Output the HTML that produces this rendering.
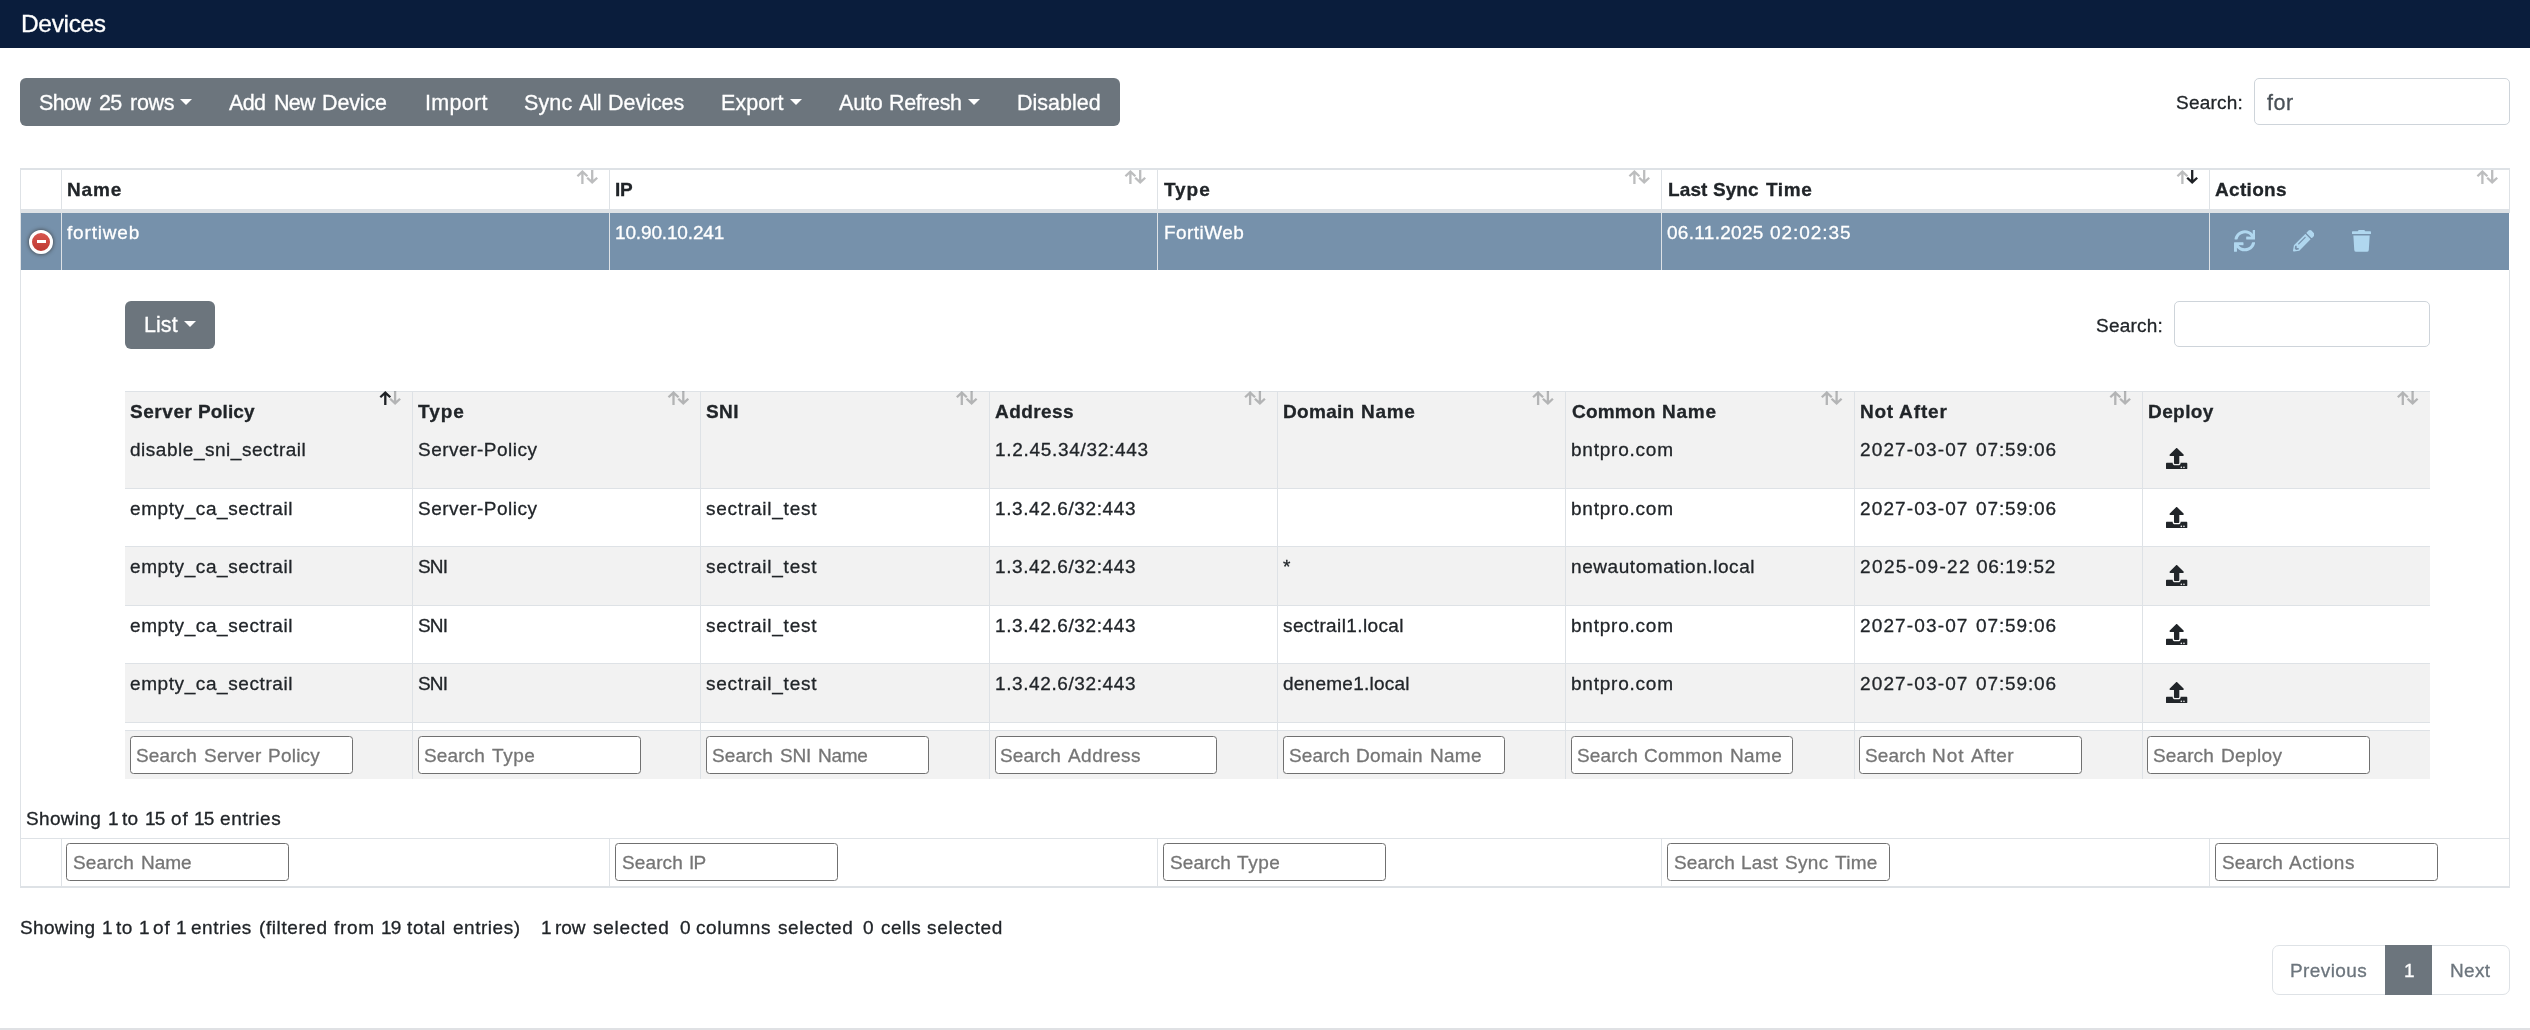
<!DOCTYPE html>
<html lang="en">
<head>
<meta charset="utf-8">
<title>Devices</title>
<style>
html,body{margin:0;padding:0;}
body{width:2530px;height:1030px;position:relative;overflow:hidden;background:#fff;
font-family:"Liberation Sans",sans-serif;color:#212529;}
.r{position:absolute;box-sizing:content-box;}
.t{position:absolute;white-space:nowrap;will-change:transform;-webkit-text-stroke:0.3px;line-height:24px;height:24px;}
.inp{position:absolute;box-sizing:border-box;border:1px solid #ced4da;border-radius:5px;background:#fff;}
.fin{position:absolute;box-sizing:border-box;width:222.8px;height:38px;border:1px solid #707070;border-radius:3.5px;background:#fff;}
</style>
</head>
<body>
<div class="r" style="left:0px;top:0px;width:2530px;height:48px;background:#0a1d3c;"></div>
<div class="t" style="left:20.60px;top:12px;font-size:24.5px;letter-spacing:-0.341px;color:#fff;">Devices</div>
<div class="r" style="left:20px;top:78px;width:1100px;height:48px;background:#6c757d;border-radius:6px;"></div>
<div class="t" style="left:39.30px;top:91px;font-size:21.5px;letter-spacing:-0.612px;color:#fff;">Show</div>
<div class="t" style="left:98.60px;top:91px;font-size:21.5px;letter-spacing:-0.800px;color:#fff;">25</div>
<div class="t" style="left:129.50px;top:91px;font-size:21.5px;letter-spacing:-0.262px;color:#fff;">rows</div>
<div class="t" style="left:229.00px;top:91px;font-size:21.5px;letter-spacing:-0.624px;color:#fff;">Add</div>
<div class="t" style="left:273.50px;top:91px;font-size:21.5px;letter-spacing:-0.800px;color:#fff;">New</div>
<div class="t" style="left:322.20px;top:91px;font-size:21.5px;letter-spacing:-0.145px;color:#fff;">Device</div>
<div class="t" style="left:424.70px;top:91px;font-size:21.5px;letter-spacing:0.314px;color:#fff;">Import</div>
<div class="t" style="left:524.00px;top:91px;font-size:21.5px;letter-spacing:0.135px;color:#fff;">Sync</div>
<div class="t" style="left:578.50px;top:91px;font-size:21.5px;letter-spacing:-0.693px;color:#fff;">All</div>
<div class="t" style="left:607.70px;top:91px;font-size:21.5px;letter-spacing:-0.029px;color:#fff;">Devices</div>
<div class="t" style="left:721.00px;top:91px;font-size:21.5px;letter-spacing:0.073px;color:#fff;">Export</div>
<div class="t" style="left:838.50px;top:91px;font-size:21.5px;letter-spacing:-0.175px;color:#fff;">Auto</div>
<div class="t" style="left:889.20px;top:91px;font-size:21.5px;letter-spacing:-0.379px;color:#fff;">Refresh</div>
<div class="t" style="left:1017.20px;top:91px;font-size:21.5px;letter-spacing:0.006px;color:#fff;">Disabled</div>
<div class="r" style="left:180.2px;top:99.2px;width:0;height:0;border-left:6px solid transparent;border-right:6px solid transparent;border-top:6px solid #fff;"></div>
<div class="r" style="left:789.6px;top:99.2px;width:0;height:0;border-left:6px solid transparent;border-right:6px solid transparent;border-top:6px solid #fff;"></div>
<div class="r" style="left:968.4px;top:99.2px;width:0;height:0;border-left:6px solid transparent;border-right:6px solid transparent;border-top:6px solid #fff;"></div>
<div class="t" style="left:2175.90px;top:91px;font-size:19.0px;letter-spacing:0.221px;">Search:</div>
<div class="inp" style="left:2254px;top:78px;width:256px;height:47px;"></div>
<div class="t" style="left:2267.00px;top:91px;font-size:21.5px;letter-spacing:0.505px;color:#495057;">for</div>
<div class="r" style="left:20px;top:168px;width:2490px;height:2px;background:#dee2e6;"></div>
<div class="r" style="left:20px;top:168px;width:1px;height:720px;background:#dee2e6;"></div>
<div class="r" style="left:2509px;top:168px;width:1px;height:720px;background:#dee2e6;"></div>
<div class="r" style="left:20px;top:209px;width:2490px;height:4px;background:#dee2e6;"></div>
<div class="r" style="left:21px;top:213px;width:2488px;height:57px;background:#7691ab;"></div>
<div class="r" style="left:2509px;top:213px;width:1px;height:57px;background:#fff;"></div>
<div class="r" style="left:20px;top:838px;width:2490px;height:1px;background:#dee2e6;"></div>
<div class="r" style="left:20px;top:886px;width:2490px;height:2px;background:#dee2e6;"></div>
<div class="r" style="left:61px;top:170px;width:1px;height:100px;background:#dee2e6;"></div>
<div class="r" style="left:61px;top:839px;width:1px;height:47px;background:#dee2e6;"></div>
<div class="r" style="left:609px;top:170px;width:1px;height:100px;background:#dee2e6;"></div>
<div class="r" style="left:609px;top:839px;width:1px;height:47px;background:#dee2e6;"></div>
<div class="r" style="left:1157px;top:170px;width:1px;height:100px;background:#dee2e6;"></div>
<div class="r" style="left:1157px;top:839px;width:1px;height:47px;background:#dee2e6;"></div>
<div class="r" style="left:1661px;top:170px;width:1px;height:100px;background:#dee2e6;"></div>
<div class="r" style="left:1661px;top:839px;width:1px;height:47px;background:#dee2e6;"></div>
<div class="r" style="left:2209px;top:170px;width:1px;height:100px;background:#dee2e6;"></div>
<div class="r" style="left:2209px;top:839px;width:1px;height:47px;background:#dee2e6;"></div>
<div class="t" style="left:66.70px;top:178px;font-size:19.0px;letter-spacing:0.848px;font-weight:700;">Name</div>
<div class="t" style="left:615.20px;top:178px;font-size:19.0px;letter-spacing:-0.355px;font-weight:700;">IP</div>
<div class="t" style="left:1164.00px;top:178px;font-size:19.0px;letter-spacing:0.920px;font-weight:700;">Type</div>
<div class="t" style="left:1667.70px;top:178px;font-size:19.0px;letter-spacing:0.112px;font-weight:700;">Last</div>
<div class="t" style="left:1713.40px;top:178px;font-size:19.0px;letter-spacing:0.063px;font-weight:700;">Sync</div>
<div class="t" style="left:1765.70px;top:178px;font-size:19.0px;letter-spacing:0.565px;font-weight:700;">Time</div>
<div class="t" style="left:2215.40px;top:178px;font-size:19.0px;letter-spacing:0.321px;font-weight:700;">Actions</div>
<div class="t" style="left:66.70px;top:221px;font-size:19.0px;letter-spacing:0.826px;color:#fff;">fortiweb</div>
<div class="t" style="left:615.40px;top:221px;font-size:19.0px;letter-spacing:-0.149px;color:#fff;">10.90.10.241</div>
<div class="t" style="left:1164.20px;top:221px;font-size:19.0px;letter-spacing:0.440px;color:#fff;">FortiWeb</div>
<div class="t" style="left:1667.10px;top:221px;font-size:19.0px;letter-spacing:0.301px;color:#fff;">06.11.2025</div>
<div class="t" style="left:1770.20px;top:221px;font-size:19.0px;letter-spacing:0.948px;color:#fff;">02:02:35</div>
<div class="r" style="left:28.6px;top:229.8px;width:18.4px;height:18.4px;border:3px solid #fff;border-radius:50%;background:linear-gradient(#d8554f,#bd3a33);box-shadow:0 0 4px #3a3a3a;"></div>
<div class="r" style="left:36.7px;top:240.3px;width:9.0px;height:3.2px;background:#fff;"></div>
<svg class="r" style="left:2233.7px;top:230.1px;" width="21.70" height="21.7" viewBox="0 0 512 512"><path fill="#b0d7ef" d="M440.65 12.57l4 82.77A247.16 247.16 0 0 0 255.83 8C134.73 8 33.91 94.92 12.29 209.82A12 12 0 0 0 24.09 224h49.05a12 12 0 0 0 11.67-9.26 175.91 175.91 0 0 1 317-56.94l-101.46-4.86a12 12 0 0 0-12.57 12v47.41a12 12 0 0 0 12 12H500a12 12 0 0 0 12-12V12a12 12 0 0 0-12-12h-47.37a12 12 0 0 0-11.98 12.57zM255.83 432a175.61 175.61 0 0 1-146-77.8l101.8 4.87a12 12 0 0 0 12.57-12v-47.4a12 12 0 0 0-12-12H12a12 12 0 0 0-12 12V500a12 12 0 0 0 12 12h47.35a12 12 0 0 0 12-12.6l-4.15-82.57A247.17 247.17 0 0 0 255.83 504c121.11 0 221.93-86.92 243.55-201.82a12 12 0 0 0-11.8-14.18h-49.05a12 12 0 0 0-11.67 9.26A175.86 175.86 0 0 1 255.83 432z"/></svg>
<svg class="r" style="left:2292.9px;top:230.3px;" width="21.60" height="21.6" viewBox="0 0 512 512"><path fill="#b0d7ef" d="M497.9 142.1l-46.1 46.1c-4.7 4.7-12.3 4.7-17 0l-111-111c-4.7-4.7-4.7-12.3 0-17l46.1-46.1c18.7-18.7 49.1-18.7 67.9 0l60.1 60.1c18.8 18.7 18.8 49.1 0 67.9zM284.2 99.8L21.6 362.4.4 483.9c-2.9 16.4 11.4 30.6 27.8 27.8l121.500-21.3 262.6-262.6c4.700-4.700 4.700-12.300 0-17l-111-111c-4.800-4.700-12.400-4.700-17.100 0zM124.1 339.9c-5.500-5.500-5.500-14.300 0-19.800l154-154c5.500-5.500 14.300-5.500 19.800 0s5.500 14.300 0 19.800l-154 154c-5.500 5.500-14.300 5.500-19.800 0zM88 424h48v36.300l-64.500 11.300-31.100-31.100L51.700 376H88v48z"/></svg>
<svg class="r" style="left:2351.9px;top:230.2px;" width="19.07" height="21.8" viewBox="0 0 448 512"><path fill="#b0d7ef" d="M432 32H312l-9.400-18.700A24 24 0 0 0 281.100 0H166.800a23.720 23.720 0 0 0-21.400 13.300L136 32H16A16 16 0 0 0 0 48v32a16 16 0 0 0 16 16h416a16 16 0 0 0 16-16V48a16 16 0 0 0-16-16zM53.200 467a48 48 0 0 0 47.900 45h245.800a48 48 0 0 0 47.900-45L416 128H32z"/></svg>
<div class="r" style="left:125px;top:301px;width:90px;height:48px;background:#6c757d;border-radius:6px;"></div>
<div class="t" style="left:144.10px;top:313px;font-size:21.5px;letter-spacing:0.049px;color:#fff;">List</div>
<div class="r" style="left:184.4px;top:321px;width:0;height:0;border-left:6px solid transparent;border-right:6px solid transparent;border-top:6px solid #fff;"></div>
<div class="t" style="left:2096.00px;top:314px;font-size:19.0px;letter-spacing:0.221px;">Search:</div>
<div class="inp" style="left:2174px;top:301px;width:256px;height:46px;"></div>
<div class="r" style="left:125px;top:391px;width:2305px;height:1px;background:#dee2e6;"></div>
<div class="r" style="left:125px;top:392px;width:2305px;height:96px;background:#f2f2f2;"></div>
<div class="r" style="left:125px;top:488px;width:2305px;height:1px;background:#dee2e6;"></div>
<div class="r" style="left:125px;top:546px;width:2305px;height:1px;background:#dee2e6;"></div>
<div class="r" style="left:125px;top:547px;width:2305px;height:58px;background:#f2f2f2;"></div>
<div class="r" style="left:125px;top:605px;width:2305px;height:1px;background:#dee2e6;"></div>
<div class="r" style="left:125px;top:663px;width:2305px;height:1px;background:#dee2e6;"></div>
<div class="r" style="left:125px;top:664px;width:2305px;height:58px;background:#f2f2f2;"></div>
<div class="r" style="left:125px;top:722px;width:2305px;height:1px;background:#dee2e6;"></div>
<div class="r" style="left:125px;top:730px;width:2305px;height:1px;background:#dee2e6;"></div>
<div class="r" style="left:125px;top:731px;width:2305px;height:48px;background:#f2f2f2;"></div>
<div class="r" style="left:412px;top:391px;width:1px;height:388px;background:#dee2e6;"></div>
<div class="r" style="left:700px;top:391px;width:1px;height:388px;background:#dee2e6;"></div>
<div class="r" style="left:989px;top:391px;width:1px;height:388px;background:#dee2e6;"></div>
<div class="r" style="left:1277px;top:391px;width:1px;height:388px;background:#dee2e6;"></div>
<div class="r" style="left:1565px;top:391px;width:1px;height:388px;background:#dee2e6;"></div>
<div class="r" style="left:1854px;top:391px;width:1px;height:388px;background:#dee2e6;"></div>
<div class="r" style="left:2142px;top:391px;width:1px;height:388px;background:#dee2e6;"></div>
<div class="t" style="left:130.00px;top:400px;font-size:19.0px;letter-spacing:0.567px;font-weight:700;">Server</div>
<div class="t" style="left:197.90px;top:400px;font-size:19.0px;letter-spacing:0.125px;font-weight:700;">Policy</div>
<div class="t" style="left:418.40px;top:400px;font-size:19.0px;letter-spacing:0.987px;font-weight:700;">Type</div>
<div class="t" style="left:706.20px;top:400px;font-size:19.0px;letter-spacing:0.414px;font-weight:700;">SNI</div>
<div class="t" style="left:994.70px;top:400px;font-size:19.0px;letter-spacing:0.413px;font-weight:700;">Address</div>
<div class="t" style="left:1283.30px;top:400px;font-size:19.0px;letter-spacing:0.305px;font-weight:700;">Domain</div>
<div class="t" style="left:1360.80px;top:400px;font-size:19.0px;letter-spacing:0.715px;font-weight:700;">Name</div>
<div class="t" style="left:1571.80px;top:400px;font-size:19.0px;letter-spacing:0.215px;font-weight:700;">Common</div>
<div class="t" style="left:1661.90px;top:400px;font-size:19.0px;letter-spacing:0.748px;font-weight:700;">Name</div>
<div class="t" style="left:1859.80px;top:400px;font-size:19.0px;letter-spacing:0.723px;font-weight:700;">Not</div>
<div class="t" style="left:1898.70px;top:400px;font-size:19.0px;letter-spacing:0.914px;font-weight:700;">After</div>
<div class="t" style="left:2148.00px;top:400px;font-size:19.0px;letter-spacing:0.411px;font-weight:700;">Deploy</div>
<div class="t" style="left:130.00px;top:438px;font-size:19.0px;letter-spacing:0.526px;">disable_sni_sectrail</div>
<div class="t" style="left:418.20px;top:438px;font-size:19.0px;letter-spacing:0.502px;">Server-Policy</div>
<div class="t" style="left:994.70px;top:438px;font-size:19.0px;letter-spacing:0.691px;">1.2.45.34/32:443</div>
<div class="t" style="left:1571.20px;top:438px;font-size:19.0px;letter-spacing:0.774px;">bntpro.com</div>
<div class="t" style="left:1860.20px;top:438px;font-size:19.0px;letter-spacing:1.135px;">2027-03-07</div>
<div class="t" style="left:1975.60px;top:438px;font-size:19.0px;letter-spacing:0.876px;">07:59:06</div>
<svg class="r" style="left:2166.4px;top:448.1px;" width="21.30" height="21.3" viewBox="0 0 512 512"><path fill="#212529" d="M296 384h-80c-13.300 0-24-10.700-24-24V192h-87.700c-17.800 0-26.700-21.500-14.100-34.100L242.300 5.700c7.500-7.500 19.800-7.500 27.300 0l152.200 152.200c12.600 12.600 3.700 34.100-14.100 34.100H320v168c0 13.300-10.700 24-24 24zm216-8v112c0 13.300-10.700 24-24 24H24c-13.300 0-24-10.700-24-24V376c0-13.300 10.700-24 24-24h136v8c0 30.900 25.100 56 56 56h80c30.900 0 56-25.100 56-56v-8h136c13.300 0 24 10.700 24 24zm-124 88c0-11-9-20-20-20s-20 9-20 20 9 20 20 20 20-9 20-20zm64 0c0-11-9-20-20-20s-20 9-20 20 9 20 20 20 20-9 20-20z"/></svg>
<div class="t" style="left:130.00px;top:497px;font-size:19.0px;letter-spacing:0.586px;">empty_ca_sectrail</div>
<div class="t" style="left:418.20px;top:497px;font-size:19.0px;letter-spacing:0.502px;">Server-Policy</div>
<div class="t" style="left:706.20px;top:497px;font-size:19.0px;letter-spacing:0.761px;">sectrail_test</div>
<div class="t" style="left:994.70px;top:497px;font-size:19.0px;letter-spacing:0.602px;">1.3.42.6/32:443</div>
<div class="t" style="left:1571.20px;top:497px;font-size:19.0px;letter-spacing:0.774px;">bntpro.com</div>
<div class="t" style="left:1860.20px;top:497px;font-size:19.0px;letter-spacing:1.135px;">2027-03-07</div>
<div class="t" style="left:1975.60px;top:497px;font-size:19.0px;letter-spacing:0.876px;">07:59:06</div>
<svg class="r" style="left:2166.4px;top:506.6px;" width="21.30" height="21.3" viewBox="0 0 512 512"><path fill="#212529" d="M296 384h-80c-13.300 0-24-10.700-24-24V192h-87.700c-17.800 0-26.700-21.500-14.100-34.100L242.300 5.700c7.500-7.500 19.800-7.500 27.300 0l152.200 152.200c12.600 12.600 3.700 34.100-14.100 34.100H320v168c0 13.300-10.700 24-24 24zm216-8v112c0 13.300-10.700 24-24 24H24c-13.300 0-24-10.700-24-24V376c0-13.300 10.700-24 24-24h136v8c0 30.900 25.100 56 56 56h80c30.900 0 56-25.100 56-56v-8h136c13.300 0 24 10.700 24 24zm-124 88c0-11-9-20-20-20s-20 9-20 20 9 20 20 20 20-9 20-20zm64 0c0-11-9-20-20-20s-20 9-20 20 9 20 20 20 20-9 20-20z"/></svg>
<div class="t" style="left:130.00px;top:555px;font-size:19.0px;letter-spacing:0.586px;">empty_ca_sectrail</div>
<div class="t" style="left:418.20px;top:555px;font-size:19.0px;letter-spacing:-0.800px;">SNI</div>
<div class="t" style="left:706.20px;top:555px;font-size:19.0px;letter-spacing:0.761px;">sectrail_test</div>
<div class="t" style="left:994.70px;top:555px;font-size:19.0px;letter-spacing:0.602px;">1.3.42.6/32:443</div>
<div class="t" style="left:1283.20px;top:555px;font-size:19.0px;">*</div>
<div class="t" style="left:1571.20px;top:555px;font-size:19.0px;letter-spacing:0.571px;">newautomation.local</div>
<div class="t" style="left:1860.20px;top:555px;font-size:19.0px;letter-spacing:1.379px;">2025-09-22</div>
<div class="t" style="left:1977.10px;top:555px;font-size:19.0px;letter-spacing:0.605px;">06:19:52</div>
<svg class="r" style="left:2166.4px;top:565.1px;" width="21.30" height="21.3" viewBox="0 0 512 512"><path fill="#212529" d="M296 384h-80c-13.300 0-24-10.700-24-24V192h-87.700c-17.800 0-26.700-21.500-14.100-34.100L242.300 5.700c7.500-7.500 19.800-7.500 27.300 0l152.200 152.200c12.600 12.600 3.700 34.100-14.100 34.100H320v168c0 13.300-10.700 24-24 24zm216-8v112c0 13.300-10.700 24-24 24H24c-13.300 0-24-10.700-24-24V376c0-13.300 10.700-24 24-24h136v8c0 30.900 25.100 56 56 56h80c30.900 0 56-25.100 56-56v-8h136c13.300 0 24 10.700 24 24zm-124 88c0-11-9-20-20-20s-20 9-20 20 9 20 20 20 20-9 20-20zm64 0c0-11-9-20-20-20s-20 9-20 20 9 20 20 20 20-9 20-20z"/></svg>
<div class="t" style="left:130.00px;top:614px;font-size:19.0px;letter-spacing:0.586px;">empty_ca_sectrail</div>
<div class="t" style="left:418.20px;top:614px;font-size:19.0px;letter-spacing:-0.800px;">SNI</div>
<div class="t" style="left:706.20px;top:614px;font-size:19.0px;letter-spacing:0.761px;">sectrail_test</div>
<div class="t" style="left:994.70px;top:614px;font-size:19.0px;letter-spacing:0.602px;">1.3.42.6/32:443</div>
<div class="t" style="left:1283.20px;top:614px;font-size:19.0px;letter-spacing:0.386px;">sectrail1.local</div>
<div class="t" style="left:1571.20px;top:614px;font-size:19.0px;letter-spacing:0.774px;">bntpro.com</div>
<div class="t" style="left:1860.20px;top:614px;font-size:19.0px;letter-spacing:1.135px;">2027-03-07</div>
<div class="t" style="left:1975.60px;top:614px;font-size:19.0px;letter-spacing:0.876px;">07:59:06</div>
<svg class="r" style="left:2166.4px;top:623.6px;" width="21.30" height="21.3" viewBox="0 0 512 512"><path fill="#212529" d="M296 384h-80c-13.300 0-24-10.700-24-24V192h-87.700c-17.800 0-26.700-21.500-14.100-34.100L242.300 5.700c7.500-7.500 19.800-7.500 27.300 0l152.200 152.200c12.600 12.600 3.700 34.100-14.100 34.100H320v168c0 13.300-10.700 24-24 24zm216-8v112c0 13.300-10.700 24-24 24H24c-13.300 0-24-10.700-24-24V376c0-13.300 10.700-24 24-24h136v8c0 30.900 25.100 56 56 56h80c30.900 0 56-25.100 56-56v-8h136c13.300 0 24 10.700 24 24zm-124 88c0-11-9-20-20-20s-20 9-20 20 9 20 20 20 20-9 20-20zm64 0c0-11-9-20-20-20s-20 9-20 20 9 20 20 20 20-9 20-20z"/></svg>
<div class="t" style="left:130.00px;top:672px;font-size:19.0px;letter-spacing:0.586px;">empty_ca_sectrail</div>
<div class="t" style="left:418.20px;top:672px;font-size:19.0px;letter-spacing:-0.800px;">SNI</div>
<div class="t" style="left:706.20px;top:672px;font-size:19.0px;letter-spacing:0.761px;">sectrail_test</div>
<div class="t" style="left:994.70px;top:672px;font-size:19.0px;letter-spacing:0.602px;">1.3.42.6/32:443</div>
<div class="t" style="left:1283.20px;top:672px;font-size:19.0px;letter-spacing:0.244px;">deneme1.local</div>
<div class="t" style="left:1571.20px;top:672px;font-size:19.0px;letter-spacing:0.774px;">bntpro.com</div>
<div class="t" style="left:1860.20px;top:672px;font-size:19.0px;letter-spacing:1.135px;">2027-03-07</div>
<div class="t" style="left:1975.60px;top:672px;font-size:19.0px;letter-spacing:0.876px;">07:59:06</div>
<svg class="r" style="left:2166.4px;top:682.1px;" width="21.30" height="21.3" viewBox="0 0 512 512"><path fill="#212529" d="M296 384h-80c-13.300 0-24-10.700-24-24V192h-87.700c-17.800 0-26.700-21.500-14.100-34.100L242.300 5.700c7.500-7.500 19.800-7.500 27.300 0l152.200 152.200c12.600 12.600 3.700 34.100-14.100 34.100H320v168c0 13.300-10.700 24-24 24zm216-8v112c0 13.300-10.700 24-24 24H24c-13.300 0-24-10.700-24-24V376c0-13.300 10.700-24 24-24h136v8c0 30.900 25.100 56 56 56h80c30.900 0 56-25.100 56-56v-8h136c13.300 0 24 10.700 24 24zm-124 88c0-11-9-20-20-20s-20 9-20 20 9 20 20 20 20-9 20-20zm64 0c0-11-9-20-20-20s-20 9-20 20 9 20 20 20 20-9 20-20z"/></svg>
<div class="fin" style="left:130.1px;top:736px;"></div>
<div class="t" style="left:136.10px;top:744px;font-size:19.0px;letter-spacing:0.122px;color:#757575;">Search</div>
<div class="t" style="left:203.70px;top:744px;font-size:19.0px;letter-spacing:0.257px;color:#757575;">Server</div>
<div class="t" style="left:267.74px;top:744px;font-size:19.0px;letter-spacing:0.233px;color:#757575;">Policy</div>
<div class="fin" style="left:418.2px;top:736px;"></div>
<div class="t" style="left:424.23px;top:744px;font-size:19.0px;letter-spacing:0.122px;color:#757575;">Search</div>
<div class="t" style="left:491.82px;top:744px;font-size:19.0px;letter-spacing:0.569px;color:#757575;">Type</div>
<div class="fin" style="left:706.4px;top:736px;"></div>
<div class="t" style="left:712.35px;top:744px;font-size:19.0px;letter-spacing:0.122px;color:#757575;">Search</div>
<div class="t" style="left:779.95px;top:744px;font-size:19.0px;letter-spacing:-0.243px;color:#757575;">SNI</div>
<div class="t" style="left:817.94px;top:744px;font-size:19.0px;letter-spacing:-0.260px;color:#757575;">Name</div>
<div class="fin" style="left:994.5px;top:736px;"></div>
<div class="t" style="left:1000.48px;top:744px;font-size:19.0px;letter-spacing:0.122px;color:#757575;">Search</div>
<div class="t" style="left:1068.08px;top:744px;font-size:19.0px;letter-spacing:0.451px;color:#757575;">Address</div>
<div class="fin" style="left:1282.6px;top:736px;"></div>
<div class="t" style="left:1288.60px;top:744px;font-size:19.0px;letter-spacing:0.122px;color:#757575;">Search</div>
<div class="t" style="left:1356.20px;top:744px;font-size:19.0px;letter-spacing:0.218px;color:#757575;">Domain</div>
<div class="t" style="left:1429.56px;top:744px;font-size:19.0px;letter-spacing:0.281px;color:#757575;">Name</div>
<div class="fin" style="left:1570.7px;top:736px;"></div>
<div class="t" style="left:1576.72px;top:744px;font-size:19.0px;letter-spacing:0.122px;color:#757575;">Search</div>
<div class="t" style="left:1644.33px;top:744px;font-size:19.0px;letter-spacing:0.341px;color:#757575;">Common</div>
<div class="t" style="left:1729.91px;top:744px;font-size:19.0px;letter-spacing:0.374px;color:#757575;">Name</div>
<div class="fin" style="left:1858.8px;top:736px;"></div>
<div class="t" style="left:1864.85px;top:744px;font-size:19.0px;letter-spacing:0.122px;color:#757575;">Search</div>
<div class="t" style="left:1932.45px;top:744px;font-size:19.0px;letter-spacing:0.935px;color:#757575;">Not</div>
<div class="t" style="left:1970.68px;top:744px;font-size:19.0px;letter-spacing:0.635px;color:#757575;">After</div>
<div class="fin" style="left:2147.0px;top:736px;"></div>
<div class="t" style="left:2152.97px;top:744px;font-size:19.0px;letter-spacing:0.122px;color:#757575;">Search</div>
<div class="t" style="left:2220.57px;top:744px;font-size:19.0px;letter-spacing:0.351px;color:#757575;">Deploy</div>
<div class="t" style="left:26.00px;top:807px;font-size:19.0px;letter-spacing:0.319px;">Showing</div>
<div class="t" style="left:107.50px;top:807px;font-size:19.0px;">1</div>
<div class="t" style="left:121.80px;top:807px;font-size:19.0px;letter-spacing:0.254px;">to</div>
<div class="t" style="left:144.80px;top:807px;font-size:19.0px;letter-spacing:-0.800px;">15</div>
<div class="t" style="left:171.00px;top:807px;font-size:19.0px;letter-spacing:0.916px;">of</div>
<div class="t" style="left:194.00px;top:807px;font-size:19.0px;letter-spacing:-0.800px;">15</div>
<div class="t" style="left:220.20px;top:807px;font-size:19.0px;letter-spacing:0.630px;">entries</div>
<div class="fin" style="left:66.4px;top:843px;"></div>
<div class="t" style="left:73.00px;top:851px;font-size:19.0px;letter-spacing:0.122px;color:#757575;">Search</div>
<div class="t" style="left:140.60px;top:851px;font-size:19.0px;letter-spacing:-0.064px;color:#757575;">Name</div>
<div class="fin" style="left:615.0px;top:843px;"></div>
<div class="t" style="left:621.60px;top:851px;font-size:19.0px;letter-spacing:0.122px;color:#757575;">Search</div>
<div class="t" style="left:689.20px;top:851px;font-size:19.0px;letter-spacing:-0.800px;color:#757575;">IP</div>
<div class="fin" style="left:1163.0px;top:843px;"></div>
<div class="t" style="left:1169.60px;top:851px;font-size:19.0px;letter-spacing:0.122px;color:#757575;">Search</div>
<div class="t" style="left:1237.20px;top:851px;font-size:19.0px;letter-spacing:0.569px;color:#757575;">Type</div>
<div class="fin" style="left:1667.0px;top:843px;"></div>
<div class="t" style="left:1673.60px;top:851px;font-size:19.0px;letter-spacing:0.122px;color:#757575;">Search</div>
<div class="t" style="left:1741.20px;top:851px;font-size:19.0px;letter-spacing:0.264px;color:#757575;">Last</div>
<div class="t" style="left:1784.70px;top:851px;font-size:19.0px;letter-spacing:0.310px;color:#757575;">Sync</div>
<div class="t" style="left:1834.67px;top:851px;font-size:19.0px;letter-spacing:0.305px;color:#757575;">Time</div>
<div class="fin" style="left:2215.0px;top:843px;"></div>
<div class="t" style="left:2221.60px;top:851px;font-size:19.0px;letter-spacing:0.122px;color:#757575;">Search</div>
<div class="t" style="left:2289.20px;top:851px;font-size:19.0px;letter-spacing:0.517px;color:#757575;">Actions</div>
<div class="t" style="left:20.20px;top:916px;font-size:19.0px;letter-spacing:0.353px;">Showing</div>
<div class="t" style="left:101.90px;top:916px;font-size:19.0px;">1</div>
<div class="t" style="left:115.90px;top:916px;font-size:19.0px;letter-spacing:0.454px;">to</div>
<div class="t" style="left:139.00px;top:916px;font-size:19.0px;">1</div>
<div class="t" style="left:153.20px;top:916px;font-size:19.0px;letter-spacing:0.916px;">of</div>
<div class="t" style="left:176.20px;top:916px;font-size:19.0px;">1</div>
<div class="t" style="left:190.90px;top:916px;font-size:19.0px;letter-spacing:0.547px;">entries</div>
<div class="t" style="left:259.00px;top:916px;font-size:19.0px;letter-spacing:0.592px;">(filtered</div>
<div class="t" style="left:334.00px;top:916px;font-size:19.0px;letter-spacing:0.733px;">from</div>
<div class="t" style="left:380.50px;top:916px;font-size:19.0px;letter-spacing:-0.800px;">19</div>
<div class="t" style="left:407.10px;top:916px;font-size:19.0px;letter-spacing:0.598px;">total</div>
<div class="t" style="left:452.80px;top:916px;font-size:19.0px;letter-spacing:0.519px;">entries)</div>
<div class="t" style="left:540.60px;top:916px;font-size:19.0px;">1</div>
<div class="t" style="left:554.80px;top:916px;font-size:19.0px;letter-spacing:-0.133px;">row</div>
<div class="t" style="left:592.50px;top:916px;font-size:19.0px;letter-spacing:0.732px;">selected</div>
<div class="t" style="left:679.50px;top:916px;font-size:19.0px;">0</div>
<div class="t" style="left:696.20px;top:916px;font-size:19.0px;letter-spacing:0.607px;">columns</div>
<div class="t" style="left:777.50px;top:916px;font-size:19.0px;letter-spacing:0.575px;">selected</div>
<div class="t" style="left:863.20px;top:916px;font-size:19.0px;">0</div>
<div class="t" style="left:880.60px;top:916px;font-size:19.0px;letter-spacing:0.445px;">cells</div>
<div class="t" style="left:927.10px;top:916px;font-size:19.0px;letter-spacing:0.661px;">selected</div>
<div class="r" style="left:2272px;top:945px;width:236px;height:48px;border:1px solid #dee2e6;border-radius:7px;background:#fff;"></div>
<div class="r" style="left:2385px;top:945px;width:47px;height:50px;background:#6c757d;"></div>
<div class="t" style="left:2290.30px;top:959px;font-size:19.0px;letter-spacing:0.396px;color:#6c757d;">Previous</div>
<div class="t" style="left:2404.00px;top:959px;font-size:19.0px;color:#fff;">1</div>
<div class="t" style="left:2449.90px;top:959px;font-size:19.0px;letter-spacing:0.345px;color:#6c757d;">Next</div>
<div class="r" style="left:0px;top:1028px;width:2530px;height:2px;background:#dfe1e4;"></div>
<svg class="r" style="left:0;top:0;" width="2530" height="1030" viewBox="0 0 2530 1030" fill="none" stroke-width="2.3" stroke-linecap="butt" stroke-linejoin="miter"><path d="M582.40 183.90V171.55M577.40 176.25L582.40 171.55L587.40 176.25M592.20 169.90V182.45M587.20 177.75L592.20 182.45L597.20 177.75" stroke="#212529" stroke-opacity="0.3"/><path d="M1130.40 183.90V171.55M1125.40 176.25L1130.40 171.55L1135.40 176.25M1140.20 169.90V182.45M1135.20 177.75L1140.20 182.45L1145.20 177.75" stroke="#212529" stroke-opacity="0.3"/><path d="M1634.40 183.90V171.55M1629.40 176.25L1634.40 171.55L1639.40 176.25M1644.20 169.90V182.45M1639.20 177.75L1644.20 182.45L1649.20 177.75" stroke="#212529" stroke-opacity="0.3"/><path d="M2182.40 183.90V171.55M2177.40 176.25L2182.40 171.55L2187.40 176.25" stroke="#212529" stroke-opacity="0.3"/><path d="M2192.20 169.90V182.45M2187.20 177.75L2192.20 182.45L2197.20 177.75" stroke="#1e2125"/><path d="M2482.40 183.90V171.55M2477.40 176.25L2482.40 171.55L2487.40 176.25M2492.20 169.90V182.45M2487.20 177.75L2492.20 182.45L2497.20 177.75" stroke="#212529" stroke-opacity="0.3"/><path d="M395.10 390.90V403.45M390.10 398.75L395.10 403.45L400.10 398.75" stroke="#212529" stroke-opacity="0.3"/><path d="M385.30 404.90V392.55M380.30 397.25L385.30 392.55L390.30 397.25" stroke="#1e2125"/><path d="M673.50 404.90V392.55M668.50 397.25L673.50 392.55L678.50 397.25M683.30 390.90V403.45M678.30 398.75L683.30 403.45L688.30 398.75" stroke="#212529" stroke-opacity="0.3"/><path d="M961.80 404.90V392.55M956.80 397.25L961.80 392.55L966.80 397.25M971.60 390.90V403.45M966.60 398.75L971.60 403.45L976.60 398.75" stroke="#212529" stroke-opacity="0.3"/><path d="M1250.10 404.90V392.55M1245.10 397.25L1250.10 392.55L1255.10 397.25M1259.90 390.90V403.45M1254.90 398.75L1259.90 403.45L1264.90 398.75" stroke="#212529" stroke-opacity="0.3"/><path d="M1538.10 404.90V392.55M1533.10 397.25L1538.10 392.55L1543.10 397.25M1547.90 390.90V403.45M1542.90 398.75L1547.90 403.45L1552.90 398.75" stroke="#212529" stroke-opacity="0.3"/><path d="M1826.80 404.90V392.55M1821.80 397.25L1826.80 392.55L1831.80 397.25M1836.60 390.90V403.45M1831.60 398.75L1836.60 403.45L1841.60 398.75" stroke="#212529" stroke-opacity="0.3"/><path d="M2115.30 404.90V392.55M2110.30 397.25L2115.30 392.55L2120.30 397.25M2125.10 390.90V403.45M2120.10 398.75L2125.10 403.45L2130.10 398.75" stroke="#212529" stroke-opacity="0.3"/><path d="M2402.80 404.90V392.55M2397.80 397.25L2402.80 392.55L2407.80 397.25M2412.60 390.90V403.45M2407.60 398.75L2412.60 403.45L2417.60 398.75" stroke="#212529" stroke-opacity="0.3"/></svg>
</body>
</html>
